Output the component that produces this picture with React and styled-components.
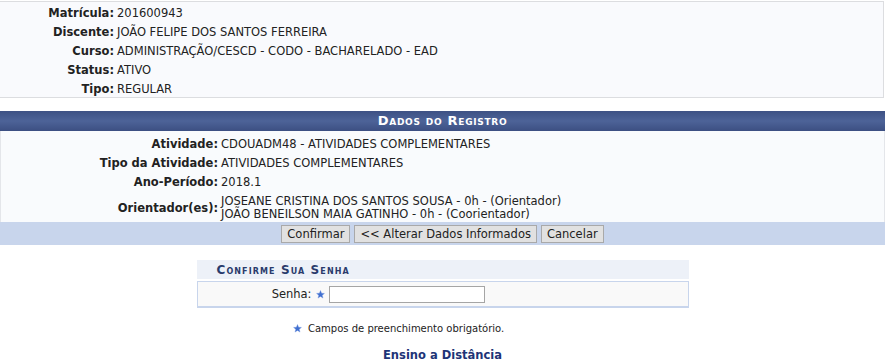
import styled, { createGlobalStyle } from 'styled-components'

const GlobalStyle = createGlobalStyle`
  html, body {
    margin: 0;
    padding: 0;
    background: #fff;
  }
  body {
    font-family: 'DejaVu Sans', Verdana, sans-serif;
    font-size: 11.5px;
    color: #111;
  }
`

const discente = [
  ['Matrícula', '201600943'],
  ['Discente', 'JOÃO FELIPE DOS SANTOS FERREIRA'],
  ['Curso', 'ADMINISTRAÇÃO/CESCD - CODO - BACHARELADO - EAD'],
  ['Status', 'ATIVO'],
  ['Tipo', 'REGULAR']
]

const registro = [
  ['Atividade', ['CDOUADM48 - ATIVIDADES COMPLEMENTARES']],
  ['Tipo da Atividade', ['ATIVIDADES COMPLEMENTARES']],
  ['Ano-Período', ['2018.1']],
  [
    'Orientador(es)',
    [
      'JOSEANE CRISTINA DOS SANTOS SOUSA - 0h - (Orientador)',
      'JOÃO BENEILSON MAIA GATINHO - 0h - (Coorientador)'
    ]
  ]
]

function Star() {
  return (
    <StarIcon viewBox="0 0 10 10" aria-hidden="true">
      <path
        d="M5 0.6 L6.2 3.6 L9.4 3.8 L6.9 5.8 L7.8 9 L5 7.2 L2.2 9 L3.1 5.8 L0.6 3.8 L3.8 3.6 Z"
        fill="#3f6fd0"
        stroke="#6b8fdc"
        strokeWidth="0.4"
      />
    </StarIcon>
  )
}

export default function App() {
  return (
    <Page>
      <GlobalStyle />
      <InfoBox>
        {discente.map(([label, value]) => (
          <InfoRow key={label}>
            <Label>{label}:</Label>
            <Value>{value}</Value>
          </InfoRow>
        ))}
      </InfoBox>

      <Registro>
        <Caption>Dados do Registro</Caption>
        <RegistroBody>
          {registro.map(([label, lines]) => (
            <RegistroRow key={label} $tall={lines.length > 1}>
              <Label>{label}:</Label>
              <Value>
                {lines.map((l) => (
                  <div key={l}>{l}</div>
                ))}
              </Value>
            </RegistroRow>
          ))}
        </RegistroBody>
        <ButtonBar>
          <Button>Confirmar</Button>
          <Button>&lt;&lt; Alterar Dados Informados</Button>
          <Button>Cancelar</Button>
        </ButtonBar>
      </Registro>

      <SenhaForm>
        <SenhaCaption>Confirme Sua Senha</SenhaCaption>
        <SenhaBody>
          <SenhaLabel>Senha:</SenhaLabel>
          <Star />
          <SenhaInput type="password" />
        </SenhaBody>
      </SenhaForm>

      <Obrigatorio>
        <Star />
        <span>Campos de preenchimento obrigatório.</span>
      </Obrigatorio>

      <Rodape>Ensino a Distância</Rodape>
    </Page>
  )
}

const Page = styled.div`
  width: 885px;
  padding-top: 1px;
`

const InfoBox = styled.div`
  border: 1px solid #dcdde0;
  border-left: none;
  background: #f9fafd;
  width: 883px;
`

const InfoRow = styled.div`
  display: grid;
  grid-template-columns: 114px 1fr;
  column-gap: 3px;
  box-sizing: border-box;
  height: 19px;
  padding-top: 3px;
  align-items: center;
`

const Label = styled.div`
  font-weight: bold;
  text-align: right;
  color: #222;
  white-space: nowrap;
  line-height: 13px;
`

const Value = styled.div`
  color: #222;
  line-height: 13px;
  white-space: nowrap;
`

const Registro = styled.div`
  margin-top: 13px;
`

const Caption = styled.div`
  height: 20px;
  line-height: 20px;
  text-align: center;
  color: #fff;
  font-weight: bold;
  font-size: 13px;
  font-variant: small-caps;
  letter-spacing: 0.7px;
  background: linear-gradient(#3d5184, #4d6398 50%, #3c4f82);
`

const RegistroBody = styled.div`
  background: #f9fbfd;
  border-left: 1px solid #e4e6ea;
  border-right: 1px solid #e4e6ea;
  padding-top: 2px;
`

const RegistroRow = styled.div`
  display: grid;
  grid-template-columns: 217px 1fr;
  column-gap: 3px;
  box-sizing: border-box;
  min-height: ${(p) => (p.$tall ? '32px' : '19px')};
  padding: ${(p) => (p.$tall ? '5px 0 1px' : '3px 0 0')};
  align-items: center;
`

const ButtonBar = styled.div`
  display: flex;
  justify-content: center;
  align-items: center;
  gap: 4px;
  height: 23px;
  background: #c8d5ec;
`

const Button = styled.button`
  font-family: 'DejaVu Sans', Verdana, sans-serif;
  font-size: 11.5px;
  color: #222;
  height: 18px;
  padding: 0 5px;
  background: #e1e1e1;
  border: 1px solid #a9a9a9;
  border-radius: 0;
`

const SenhaForm = styled.div`
  width: 492px;
  margin: 15px auto 0;
`

const SenhaCaption = styled.div`
  height: 19px;
  line-height: 20px;
  padding-left: 20px;
  background: #edf1f8;
  color: #2a3b6c;
  font-weight: bold;
  font-size: 12px;
  font-variant: small-caps;
  letter-spacing: 1.1px;
`

const SenhaBody = styled.div`
  margin-top: 2px;
  display: flex;
  align-items: center;
  height: 24px;
  background: #f9f9f9;
  border: 1px solid #c8d5ec;
  border-bottom-width: 2px;
`

const SenhaLabel = styled.div`
  width: 114px;
  text-align: right;
  color: #222;
  margin-right: 4px;
`

const StarIcon = styled.svg`
  width: 9px;
  height: 9px;
  flex: none;
`

const SenhaInput = styled.input`
  margin-left: 4px;
  width: 156px;
  height: 17px;
  box-sizing: border-box;
  border: 1px solid #a5a5a5;
  padding: 0 2px;
  background: #fff;
`

const Obrigatorio = styled.div`
  display: flex;
  align-items: center;
  gap: 6px;
  margin-top: 14px;
  padding-left: 293px;
  font-size: 10px;
  line-height: 13px;
  color: #222;
`

const Rodape = styled.div`
  margin-top: 14px;
  text-align: center;
  font-weight: bold;
  color: #1e3477;
  line-height: 13px;
  padding-bottom: 1px;
  border-bottom: 2px solid #e8a23a;
`
